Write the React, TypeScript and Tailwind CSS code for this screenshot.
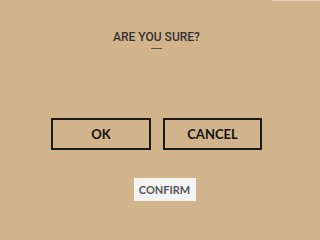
export default function App() {
  return (
    <div className="relative w-[320px] h-[240px] bg-[#d2b48c] overflow-hidden font-['Lato',sans-serif]">
      <div className="absolute top-0 right-0 w-[48px] h-px bg-[#e6d2b6]" />
      <div className="w-[313px] flex flex-col items-center pt-[29px]">
        <h1 className="font-['Roboto',sans-serif] font-medium text-[12px] leading-[16px] text-[#333]">
          ARE YOU SURE?
        </h1>
        <div className="mt-[3px] w-[11px] h-px bg-[#555]" />
      </div>
      <div className="w-[313px] flex justify-center gap-[12px] mt-[69px]">
        <button
          type="button"
          className="w-[100px] h-[32px] border-2 border-[#1c1a16] font-bold text-[13px] text-[#111] leading-none"
        >
          OK
        </button>
        <button
          type="button"
          className="w-[99px] h-[32px] border-2 border-[#1c1a16] font-bold text-[13px] text-[#111] leading-none"
        >
          CANCEL
        </button>
      </div>
      <div className="flex justify-center mt-[28px] pl-[9px]">
        <button
          type="button"
          className="w-[62px] h-[23px] bg-[#f4f4f4] font-bold text-[11px] text-[#555] leading-none"
        >
          CONFIRM
        </button>
      </div>
    </div>
  )
}
